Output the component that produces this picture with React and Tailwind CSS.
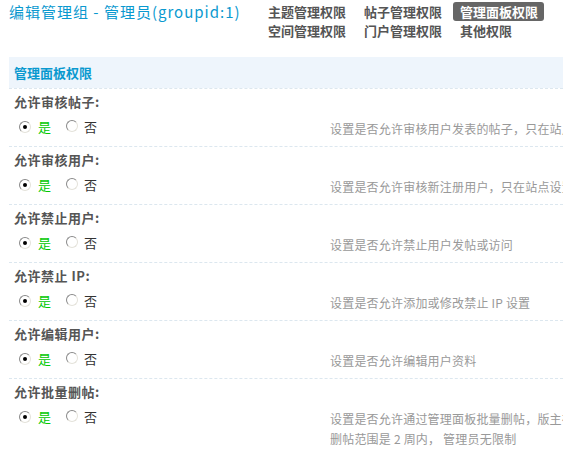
import React from 'react';

const tabs = [
  { label: '主题管理权限' },
  { label: '帖子管理权限' },
  { label: '管理面板权限', active: true },
  { label: '空间管理权限' },
  { label: '门户管理权限' },
  { label: '其他权限' },
];

const options = [
  { label: '允许审核帖子:', desc: ['设置是否允许审核用户发表的帖子，只在站点开启审核时有效'] },
  { label: '允许审核用户:', desc: ['设置是否允许审核新注册用户，只在站点设置需要审核新用户时有效'] },
  { label: '允许禁止用户:', desc: ['设置是否允许禁止用户发帖或访问'] },
  { label: '允许禁止 IP:', desc: ['设置是否允许添加或修改禁止 IP 设置'] },
  { label: '允许编辑用户:', desc: ['设置是否允许编辑用户资料'] },
  {
    label: '允许批量删帖:',
    desc: ['设置是否允许通过管理面板批量删帖，版主在管理面板中的', '删帖范围是 2 周内， 管理员无限制'],
  },
];

function Radio({ checked }) {
  return (
    <span className="inline-flex items-center justify-center w-[12px] h-[12px] rounded-full bg-white border-[1.5px] border-t-[#8a8a8a] border-l-[#8a8a8a] border-r-[#e4e2da] border-b-[#e4e2da]">
      {checked && <span className="w-[4px] h-[4px] rounded-full bg-black" />}
    </span>
  );
}

function OptionRow({ label, desc }) {
  return (
    <div className="border-t border-dashed border-[#dce7ef] pt-[4px] pb-[7px] pl-[5px]">
      <div className="h-[18px] leading-[18px] text-[13px] font-bold text-[#555] tracking-[0.5px]">{label}</div>
      <div className="mt-[7px] flex items-start">
        <div className="w-[316px] shrink-0 pl-[5px] h-[18px] flex items-center text-[13px]">
          <Radio checked />
          <span className="ml-[7px] text-[#00c800]">是</span>
          <span className="ml-[15px]">
            <Radio />
          </span>
          <span className="ml-[6px] text-[#333]">否</span>
        </div>
        <div className="mt-[1px] text-[12px] leading-[20px] text-[#999] whitespace-nowrap tracking-[0.2px]">
          {desc.map((line) => (
            <div key={line} className="whitespace-pre">{line}</div>
          ))}
        </div>
      </div>
    </div>
  );
}

export default function App() {
  return (
    <div
      className="w-[563px] h-[452px] overflow-hidden bg-white"
      style={{ fontFamily: '"Noto Sans CJK SC", "Noto Sans", sans-serif' }}
    >
      {/* top: title and permission tabs */}
      <div className="flex pt-[2px] pl-[9px]">
        <div className="w-[252px] h-[19px] leading-[19px] text-[15px] tracking-[1px] text-[#0a99cf] whitespace-nowrap">
          编辑管理组 - 管理员(groupid:1)
        </div>
        <div className="grid grid-cols-[91px_91px_91px] gap-x-[5px]">
          {tabs.map((t) => (
            <div
              key={t.label}
              className={
                t.active
                  ? 'h-[19px] leading-[19px] px-[7px] rounded-[3px] bg-[#666] text-white text-[13px] font-bold whitespace-nowrap'
                  : 'h-[19px] leading-[19px] px-[7px] text-[#555] text-[13px] font-bold whitespace-nowrap'
              }
            >
              {t.label}
            </div>
          ))}
        </div>
      </div>

      {/* settings table */}
      <div className="mt-[17px] ml-[9px]">
        <div className="h-[31px] bg-[#eef5fc] pl-[5px] flex items-center text-[13px] font-bold text-[#0a99cf]">
          管理面板权限
        </div>
        {options.map((o) => (
          <OptionRow key={o.label} label={o.label} desc={o.desc} />
        ))}
      </div>
    </div>
  );
}
